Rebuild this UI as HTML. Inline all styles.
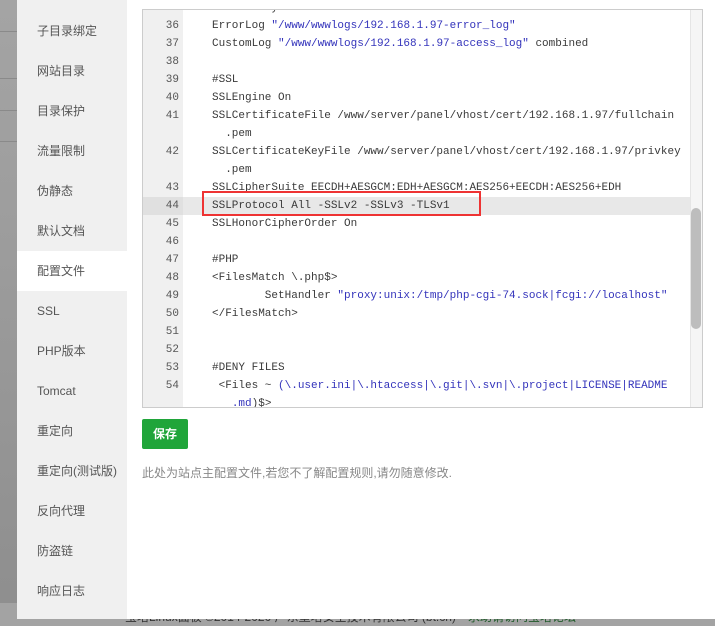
<!DOCTYPE html>
<html><head><meta charset="utf-8"><style>
*{margin:0;padding:0;box-sizing:border-box}
body{width:715px;height:626px;overflow:hidden;background:#9a9a9a;position:relative;font-family:"Liberation Sans","Noto Sans CJK SC",sans-serif}
.strip{position:absolute;left:0;top:0;width:17px;height:626px;background:linear-gradient(#a4a4a4,#9e9e9e 200px,#8f8f8f 590px)}
.strip i{position:absolute;left:0;width:17px;height:1px;background:#8a8a8a}
.foot{position:absolute;left:0;top:603px;width:715px;height:23px;background:#a3a3a3;font-size:12px;color:#333}
.modal{position:absolute;left:17px;top:0;width:698px;height:619px;background:#fff}
.side{position:absolute;left:0;top:0;width:110px;height:619px;background:#f0f0f0}
.side div{height:40px;line-height:40px;padding-left:20px;font-size:12px;color:#555}
.side div.on{background:#fff}
.side div:first-child{height:51px;line-height:62px}
.ed{position:absolute;left:125px;top:9px;width:561px;height:399px;border:1px solid #ccc;overflow:hidden;background:#fff}
.gut{position:absolute;left:0;top:0;width:40px;height:100%;background:#f0f0f0}
.lines{position:absolute;left:0;top:-11px;width:548px;font-family:"Liberation Mono",monospace;font-size:11px;color:#3a3a3a}
.l{height:18px;line-height:18px;position:relative;white-space:pre}
.l .n{position:absolute;left:0;width:36px;text-align:right;color:#555}
.l .c{position:absolute;left:69px}
.hl{background:#e8e8e8}
.s{color:#3333bb}
.sb{position:absolute;left:547px;top:0;width:12px;height:100%;background:#f5f5f5;border-left:1px solid #e5e5e5}
.th{position:absolute;left:548px;top:198px;width:10px;height:121px;background:#bdbdbd;border-radius:5px}
.red{position:absolute;left:185px;top:191px;width:279px;height:25px;border:2px solid #e33}
.btn{position:absolute;left:125px;top:419px;width:46px;height:30px;background:#20a53a;border-radius:2px;color:#fff;font-size:12px;font-weight:bold;text-align:center;line-height:30px}
.tip{position:absolute;left:125px;top:464px;font-size:12px;color:#888}
</style></head><body>
<div class="strip"><i style="top:31px"></i><i style="top:78px"></i><i style="top:110px"></i><i style="top:141px"></i></div>
<div class="foot"><span style="position:absolute;left:125px;top:5px">宝塔Linux面板 ©2014-2020 广东堡塔安全技术有限公司 (bt.cn)　<span style="color:#205a2a">求助请访问宝塔论坛</span></span></div>
<div class="modal">
<div class="side">
<div>子目录绑定</div><div>网站目录</div><div>目录保护</div><div>流量限制</div><div>伪静态</div><div>默认文档</div><div class="on">配置文件</div><div>SSL</div><div>PHP版本</div><div>Tomcat</div><div>重定向</div><div>重定向(测试版)</div><div>反向代理</div><div>防盗链</div><div>响应日志</div>
</div>
<div class="ed">
<div class="gut"></div>
<div class="lines">
<div class="l"><span class="n">35</span><span class="c">#DirectoryIndex ...</span></div>
<div class="l"><span class="n">36</span><span class="c">ErrorLog <span class="s">"/www/wwwlogs/192.168.1.97-error_log"</span></span></div>
<div class="l"><span class="n">37</span><span class="c">CustomLog <span class="s">"/www/wwwlogs/192.168.1.97-access_log"</span> combined</span></div>
<div class="l"><span class="n">38</span></div>
<div class="l"><span class="n">39</span><span class="c">#SSL</span></div>
<div class="l"><span class="n">40</span><span class="c">SSLEngine On</span></div>
<div class="l"><span class="n">41</span><span class="c">SSLCertificateFile /www/server/panel/vhost/cert/192.168.1.97/fullchain</span></div>
<div class="l"><span class="c">  .pem</span></div>
<div class="l"><span class="n">42</span><span class="c">SSLCertificateKeyFile /www/server/panel/vhost/cert/192.168.1.97/privkey</span></div>
<div class="l"><span class="c">  .pem</span></div>
<div class="l"><span class="n">43</span><span class="c">SSLCipherSuite EECDH+AESGCM:EDH+AESGCM:AES256+EECDH:AES256+EDH</span></div>
<div class="l hl"><span class="n" style="background:#e0e0e0;width:40px;padding-right:4px">44</span><span class="c">SSLProtocol All -SSLv2 -SSLv3 -TLSv1</span></div>
<div class="l"><span class="n">45</span><span class="c">SSLHonorCipherOrder On</span></div>
<div class="l"><span class="n">46</span></div>
<div class="l"><span class="n">47</span><span class="c">#PHP</span></div>
<div class="l"><span class="n">48</span><span class="c">&lt;FilesMatch \.php$&gt;</span></div>
<div class="l"><span class="n">49</span><span class="c">        SetHandler <span class="s">"proxy:unix:/tmp/php-cgi-74.sock|fcgi://localhost"</span></span></div>
<div class="l"><span class="n">50</span><span class="c">&lt;/FilesMatch&gt;</span></div>
<div class="l"><span class="n">51</span></div>
<div class="l"><span class="n">52</span></div>
<div class="l"><span class="n">53</span><span class="c">#DENY FILES</span></div>
<div class="l"><span class="n">54</span><span class="c"> &lt;Files ~ <span class="s">(\.user.ini|\.htaccess|\.git|\.svn|\.project|LICENSE|README</span></span></div>
<div class="l"><span class="c">   <span class="s">.md</span>)$&gt;</span></div>
</div>
<div class="sb"></div><div class="th"></div>
</div>
<div class="red" style="left:185px"></div>
<div class="btn">保存</div>
<div class="tip">此处为站点主配置文件,若您不了解配置规则,请勿随意修改.</div>
</div>
</body></html>
